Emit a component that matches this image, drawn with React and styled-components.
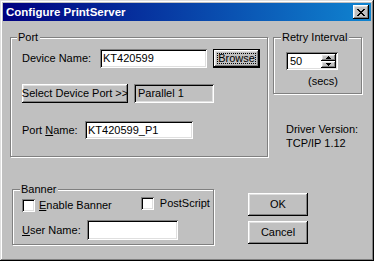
import React from "react";
import styled, { createGlobalStyle, css } from "styled-components";

const GlobalStyle = createGlobalStyle`
  html, body {
    margin: 0;
    padding: 0;
    background: #c0c0c0;
  }
  body {
    font-family: "Liberation Sans", Arial, sans-serif;
    font-size: 11px;
    color: #000;
  }
`;

const raised = css`
  background: #c0c0c0;
  box-shadow: inset -1px -1px #000, inset 1px 1px #fff,
    inset -2px -2px #808080, inset 2px 2px #dfdfdf;
`;

const sunken = css`
  box-shadow: inset 1px 1px #808080, inset -1px -1px #fff,
    inset 2px 2px #000, inset -2px -2px #dfdfdf;
`;

const Window = styled.div`
  box-sizing: border-box;
  width: 374px;
  height: 261px;
  padding: 3px;
  background: #c0c0c0;
  box-shadow: inset -1px -1px #000, inset 1px 1px #dfdfdf,
    inset -2px -2px #808080, inset 2px 2px #fff;
  display: flex;
  flex-direction: column;
`;

const TitleBar = styled.div`
  height: 18px;
  display: flex;
  align-items: center;
  justify-content: space-between;
  padding: 0 2px 0 3px;
  background: linear-gradient(to right, #000080, #1084d0);
`;

const Title = styled.span`
  color: #fff;
  font-weight: bold;
  font-size: 11.5px;
  line-height: 13px;
`;

const CloseButton = styled.button`
  ${raised};
  width: 16px;
  height: 14px;
  border: none;
  padding: 0;
  display: flex;
  align-items: center;
  justify-content: center;
`;

const Client = styled.div`
  display: flex;
  flex-direction: column;
  padding: 16px 0 0 7px;
`;

const TopRow = styled.div`
  display: flex;
  gap: 5px;
`;

const BottomRow = styled.div`
  display: flex;
  margin: 32px 0 0 2px;
  gap: 34px;
  align-items: flex-start;
`;

const Group = styled.div`
  position: relative;
  box-sizing: border-box;
  width: ${(p) => p.w}px;
  height: ${(p) => p.h}px;
  border: 1px solid #808080;
  box-shadow: inset 1px 1px #fff, 1px 1px #fff;
  padding: ${(p) => p.pad};
  display: flex;
  flex-direction: column;
`;

const GroupLabel = styled.span`
  position: absolute;
  top: -7px;
  left: ${(p) => p.left || 6}px;
  padding: 0 2px 0 1px;
  line-height: 13px;
  background: #c0c0c0;
`;

const Row = styled.div`
  display: flex;
  align-items: ${(p) => p.align || "center"};
  margin-top: ${(p) => p.mt || 0}px;
`;

const Label = styled.span`
  width: ${(p) => p.w}px;
  flex: none;
  line-height: 13px;
`;

const Key = styled.span`
  text-decoration: underline;
`;

const TextBox = styled.div`
  ${sunken};
  box-sizing: border-box;
  width: ${(p) => p.w}px;
  height: ${(p) => p.h || 19}px;
  background: ${(p) => (p.$static ? "#c0c0c0" : "#fff")};
  padding-left: ${(p) => (p.$static ? 4 : 3)}px;
  margin-left: ${(p) => p.ml || 0}px;
  display: flex;
  align-items: center;
  line-height: 13px;
  flex: none;
`;

const Button = styled.div`
  ${raised};
  box-sizing: border-box;
  width: ${(p) => p.w}px;
  height: ${(p) => p.h || 19}px;
  display: flex;
  align-items: center;
  justify-content: center;
  line-height: 13px;
  margin-left: ${(p) => p.ml || 0}px;
  flex: none;
  white-space: nowrap;
  ${(p) =>
    p.isDefault &&
    css`
      padding: 4px;
      box-shadow: inset 0 0 0 1px #000, inset -2px -2px #000,
        inset 2px 2px #fff, inset -3px -3px #808080, inset 3px 3px #dfdfdf;
    `}
`;

const Focus = styled.span`
  flex: 1;
  align-self: stretch;
  display: flex;
  align-items: center;
  justify-content: center;
  outline: 1px dotted #000;
  outline-offset: -1px;
`;

const Spin = styled.div`
  ${sunken};
  box-sizing: border-box;
  width: 52px;
  height: 18px;
  background: #fff;
  padding: 2px;
  display: flex;
  align-items: stretch;
`;

const SpinText = styled.span`
  flex: 1;
  padding-left: 2px;
  line-height: 14px;
`;

const SpinButtons = styled.div`
  width: 15px;
  display: flex;
  flex-direction: column;
`;

const SpinButton = styled.div`
  ${raised};
  flex: 1;
  display: flex;
  align-items: center;
  justify-content: center;
`;

const Secs = styled.span`
  margin: 5px 0 0 22px;
  line-height: 13px;
`;

const RightColumn = styled.div`
  display: flex;
  flex-direction: column;
`;

const Info = styled.div`
  margin: 28px 0 0 13px;
  line-height: 14px;
`;

const Check = styled.label`
  display: flex;
  align-items: center;
  gap: ${(p) => p.gap}px;
  margin-top: ${(p) => p.mt || 0}px;
  margin-left: ${(p) => p.ml || 0}px;
  line-height: 13px;
`;

const Box = styled.span`
  ${sunken};
  width: 13px;
  height: 13px;
  background: #fff;
  flex: none;
`;

const Buttons = styled.div`
  display: flex;
  flex-direction: column;
  gap: 5px;
  margin-top: 4px;
`;

const Arrow = ({ up }) => (
  <svg width="5" height="3" viewBox="0 0 5 3">
    <path d={up ? "M2 0h1v1h1v1h1v1H0V2h1V1h1z" : "M0 0h5v1H4v1H3v1H2V2H1V1H0z"} fill="#000" />
  </svg>
);

export default function App() {
  return (
    <>
      <GlobalStyle />
      <Window>
        <TitleBar>
          <Title>Configure PrintServer</Title>
          <CloseButton>
            <svg width="8" height="7" viewBox="0 0 8 7">
              <path
                d="M0 0h2v1h1v1h2V1h1V0h2v1H7v1H6v1H5v1h1v1h1v1h1v1H6V6H5V5H3v1H2v1H0V6h1V5h1V4h1V3H2V2H1V1H0z"
                fill="#000"
              />
            </svg>
          </CloseButton>
        </TitleBar>
        <Client>
          <TopRow>
            <Group w={258} h={120} pad="11px 0 0 11px">
              <GroupLabel>Port</GroupLabel>
              <Row>
                <Label w={78}>Device Name:</Label>
                <TextBox w={107}>KT420599</TextBox>
                <Button w={47} ml={6} isDefault>
                  <Focus>Browse</Focus>
                </Button>
              </Row>
              <Row mt={16}>
                <Button w={106}>Select Device Port &gt;&gt;</Button>
                <TextBox w={80} ml={6} $static>
                  Parallel 1
                </TextBox>
              </Row>
              <Row mt={18}>
                <Label w={63}>
                  Port <Key>N</Key>ame:
                </Label>
                <TextBox w={108} h={18}>KT420599_P1</TextBox>
              </Row>
            </Group>
            <RightColumn>
              <Group w={89} h={57} pad="14px 0 0 12px">
                <GroupLabel left={7}>Retry Interval</GroupLabel>
                <Spin>
                  <SpinText>50</SpinText>
                  <SpinButtons>
                    <SpinButton>
                      <Arrow up />
                    </SpinButton>
                    <SpinButton>
                      <Arrow />
                    </SpinButton>
                  </SpinButtons>
                </Spin>
                <Secs>(secs)</Secs>
              </Group>
              <Info>
                Driver Version:
                <br />
                TCP/IP 1.12
              </Info>
            </RightColumn>
          </TopRow>
          <BottomRow>
            <Group w={202} h={56} pad="9px 0 0 9px">
              <GroupLabel left={7}>Banner</GroupLabel>
              <Row align="flex-start">
                <Check gap={4}>
                  <Box />
                  <span>
                    <Key>E</Key>nable Banner
                  </span>
                </Check>
                <Check gap={6} mt={-2} ml={29}>
                  <Box />
                  PostScript
                </Check>
              </Row>
              <Row mt={8}>
                <Label w={65}>
                  <Key>U</Key>ser Name:
                </Label>
                <TextBox w={91} h={20} />
              </Row>
            </Group>
            <Buttons>
              <Button w={60} h={23}>OK</Button>
              <Button w={60} h={23}>Cancel</Button>
            </Buttons>
          </BottomRow>
        </Client>
      </Window>
    </>
  );
}
